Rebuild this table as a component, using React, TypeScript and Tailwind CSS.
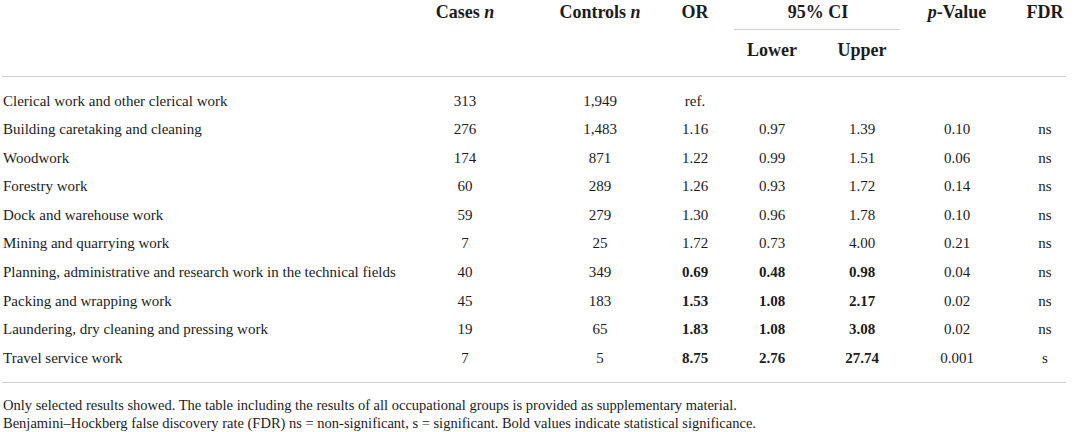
import React from "react";

type Row = {
  label: string;
  cases: string;
  controls: string;
  or: string;
  lower: string;
  upper: string;
  p: string;
  fdr: string;
  bold?: boolean;
};

const rows: Row[] = [
  { label: "Clerical work and other clerical work", cases: "313", controls: "1,949", or: "ref.", lower: "", upper: "", p: "", fdr: "" },
  { label: "Building caretaking and cleaning", cases: "276", controls: "1,483", or: "1.16", lower: "0.97", upper: "1.39", p: "0.10", fdr: "ns" },
  { label: "Woodwork", cases: "174", controls: "871", or: "1.22", lower: "0.99", upper: "1.51", p: "0.06", fdr: "ns" },
  { label: "Forestry work", cases: "60", controls: "289", or: "1.26", lower: "0.93", upper: "1.72", p: "0.14", fdr: "ns" },
  { label: "Dock and warehouse work", cases: "59", controls: "279", or: "1.30", lower: "0.96", upper: "1.78", p: "0.10", fdr: "ns" },
  { label: "Mining and quarrying work", cases: "7", controls: "25", or: "1.72", lower: "0.73", upper: "4.00", p: "0.21", fdr: "ns" },
  { label: "Planning, administrative and research work in the technical fields", cases: "40", controls: "349", or: "0.69", lower: "0.48", upper: "0.98", p: "0.04", fdr: "ns", bold: true },
  { label: "Packing and wrapping work", cases: "45", controls: "183", or: "1.53", lower: "1.08", upper: "2.17", p: "0.02", fdr: "ns", bold: true },
  { label: "Laundering, dry cleaning and pressing work", cases: "19", controls: "65", or: "1.83", lower: "1.08", upper: "3.08", p: "0.02", fdr: "ns", bold: true },
  { label: "Travel service work", cases: "7", controls: "5", or: "8.75", lower: "2.76", upper: "27.74", p: "0.001", fdr: "s", bold: true },
];

const grid =
  "grid grid-cols-[418px_112px_115px_86px_84px_93px_91px_65px]";

export default function App() {
  return (
    <div className="w-[1089px] h-[432px] bg-white text-[#1c1c1c] font-['Liberation_Serif',serif] overflow-hidden">
      <div className="ml-[2px] w-[1064px]">
        {/* Header */}
        <div className="border-b border-[#cfcfcf] h-[77px] text-[18px] font-bold">
          <div className={`${grid} h-[30px]`}>
            <div />
            <div className="text-center pr-[22px] leading-[24px] whitespace-nowrap">
              Cases <i>n</i>
            </div>
            <div className="text-center pl-[21px] leading-[24px] whitespace-nowrap">
              Controls <i>n</i>
            </div>
            <div className="text-center pl-[10px] leading-[24px]">OR</div>
            <div className="col-span-2 mr-[10px] ml-[1px]">
              <div className="h-[30px] border-b border-[#cfcfcf] text-center pl-[2px] leading-[24px]">
                95% CI
              </div>
            </div>
            <div className="text-center pl-[3px] leading-[24px] whitespace-nowrap">
              <i>p</i>-Value
            </div>
            <div className="text-center pl-[23px] leading-[24px]">FDR</div>
          </div>
          <div className={`${grid} h-[46px]`}>
            <div />
            <div />
            <div />
            <div />
            <div className="text-center pr-[6px] leading-[40px]">Lower</div>
            <div className="text-center pr-[3px] leading-[40px]">Upper</div>
            <div />
            <div />
          </div>
        </div>

        {/* Body */}
        <div className="pt-[9.7px] pb-[9.7px] border-b border-[#cfcfcf] text-[15px]">
          {rows.map((r) => (
            <div key={r.label} className={`${grid} h-[28.56px] leading-[28.56px]`}>
              <div className="pl-[1px] whitespace-nowrap">{r.label}</div>
              <div className="text-center pr-[22px]">{r.cases}</div>
              <div className="text-center pl-[21px]">{r.controls}</div>
              <div className={`text-center pl-[10px] ${r.bold ? "font-bold" : ""}`}>{r.or}</div>
              <div className={`text-center pr-[6px] ${r.bold ? "font-bold" : ""}`}>{r.lower}</div>
              <div className={`text-center pr-[3px] ${r.bold ? "font-bold" : ""}`}>{r.upper}</div>
              <div className="text-center pl-[3px]">{r.p}</div>
              <div className="text-center pl-[23px]">{r.fdr}</div>
            </div>
          ))}
        </div>

        {/* Footnotes */}
        <div className="mt-[13px] text-[14.5px] leading-[18px] pl-[1px] whitespace-nowrap">
          <p>
            Only selected results showed. The table including the results of all occupational groups is provided as supplementary material.
          </p>
          <p>
            Benjamini–Hockberg false discovery rate (FDR) ns = non-significant, s = significant. Bold values indicate statistical significance.
          </p>
        </div>
      </div>
    </div>
  );
}
